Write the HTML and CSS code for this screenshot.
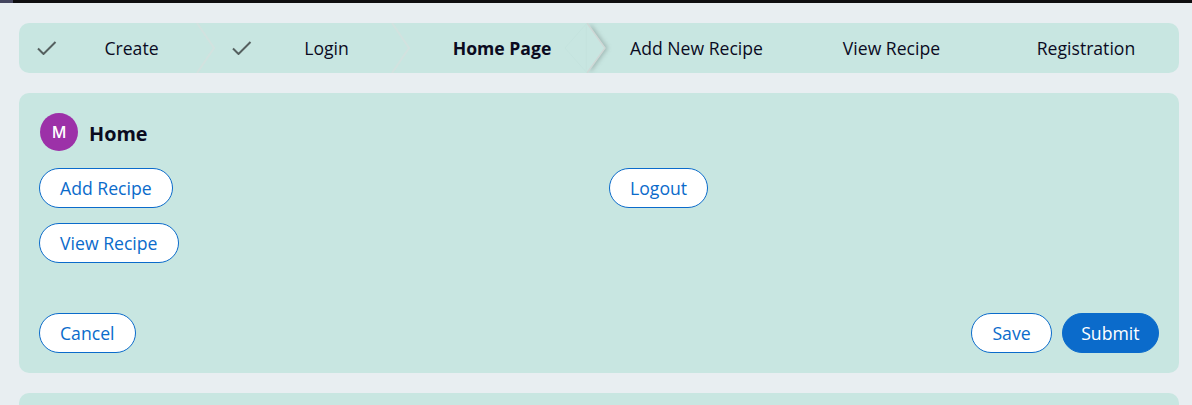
FILE: index.html
```html
<!DOCTYPE html>
<html>
    <head>
        <link rel="stylesheet" href="styles.css">
    </head>
    <body>
        <div class="topbar"><div class="topbar-tab"></div></div>
        <div class="page">
            <div class="stepper">
                <div class="step step-done">
                    <svg class="check" width="20" height="14" viewBox="0 0 20 14"><path d="M1 7.5 L6.5 13 L18.5 1" fill="none" stroke="#55605f" stroke-width="2"/></svg>
                    <span class="step-label">Create</span>
                    <svg class="sep" width="18" height="50" viewBox="0 0 18 50"><path d="M0 0 L17 25 L0 50" fill="none" stroke="#d2e2df" stroke-width="2"/></svg>
                </div>
                <div class="step step-done">
                    <svg class="check" width="20" height="14" viewBox="0 0 20 14"><path d="M1 7.5 L6.5 13 L18.5 1" fill="none" stroke="#55605f" stroke-width="2"/></svg>
                    <span class="step-label">Login</span>
                    <svg class="sep" width="18" height="50" viewBox="0 0 18 50"><path d="M0 0 L17 25 L0 50" fill="none" stroke="#d2e2df" stroke-width="2"/></svg>
                </div>
                <div class="step step-current">
                    <span class="step-label">Home Page</span>
                    <svg class="sep sep-current" width="48" height="50" viewBox="0 0 48 50">
                        <polygon class="sep-shape" points="27,0 45,25 27,50"/>
                        <path class="sep-edge" d="M27 0 L45 25 L27 50"/>
                        <path class="sep-back" d="M27 0 L5 25 L27 50"/>
                    </svg>
                </div>
                <div class="step"><span class="step-label">Add New Recipe</span></div>
                <div class="step step-view"><span class="step-label">View Recipe</span></div>
                <div class="step step-last"><span class="step-label">Registration</span></div>
            </div>

            <div class="panel">
                <div class="panel-head">
                    <div class="avatar">M</div>
                    <h2 class="panel-title">Home</h2>
                </div>
                <div class="actions">
                    <div class="actions-col">
                        <button class="btn">Add Recipe</button>
                        <button class="btn">View Recipe</button>
                    </div>
                    <div class="actions-col">
                        <button class="btn">Logout</button>
                    </div>
                </div>
                <div class="panel-foot">
                    <button class="btn">Cancel</button>
                    <div class="foot-right">
                        <button class="btn">Save</button>
                        <button class="btn btn-primary">Submit</button>
                    </div>
                </div>
            </div>

            <div class="panel panel-next"></div>
        </div>
    </body>
</html>
```

FILE: styles.css
```css
html, body {
    margin: 0;
    height: 405px;
    overflow: hidden;
}

body {
    background-color: #e8eef1;
    font-family: "Open Sans", "Liberation Sans", sans-serif;
    font-size: 17.6px;
    color: #0b0b1f;
}

.topbar {
    height: 3px;
    background-color: #0e0e10;
}

.topbar-tab {
    width: 13px;
    height: 3px;
    background-color: #44465f;
}

.page {
    padding: 20px 13px 0 19px;
    display: flex;
    flex-direction: column;
    gap: 20px;
}

/* stepper */
.stepper {
    display: flex;
    height: 50px;
    background-color: #c8e6e1;
    border-radius: 10px;
    overflow: hidden;
}

.step {
    position: relative;
    width: 195px;
    display: flex;
    align-items: center;
    flex: none;
    box-sizing: border-box;
}

.step-done {
    padding: 0 8px 0 18px;
}

.check {
    flex: none;
}

.step-label {
    flex: 1;
    text-align: center;
}

.step-current {
    width: 190px;
    padding-right: 4px;
    font-weight: 700;
}

.step-view {
    width: 194px;
    padding-left: 1px;
}

.step-last {
    width: 191px;
    padding-left: 5px;
}

.sep {
    position: absolute;
    top: 0;
    right: -1px;
    overflow: visible;
}

.sep-current {
    right: -9px;
}

.sep-shape {
    fill: #c8e6e1;
    filter: drop-shadow(3px 0 2px rgba(70, 80, 80, 0.3));
}

.sep-edge {
    fill: none;
    stroke: #cfd8d6;
    stroke-width: 1.5;
}

.sep-back {
    fill: none;
    stroke: #c4e3de;
    stroke-width: 1;
}

/* panels */
.panel {
    background-color: #c8e6e1;
    border-radius: 10px;
    height: 280px;
    box-sizing: border-box;
    padding: 20px;
    display: flex;
    flex-direction: column;
}

.panel-next {
    height: 12px;
    border-radius: 10px 10px 0 0;
    padding: 0;
}

.panel-head {
    display: flex;
    align-items: center;
    gap: 11px;
    height: 38px;
    margin-left: 1px;
}

.avatar {
    width: 38px;
    height: 38px;
    border-radius: 50%;
    background-color: #9c31a8;
    color: #fff;
    font-size: 16px;
    font-weight: 600;
    display: flex;
    align-items: center;
    justify-content: center;
}

.panel-title {
    margin: 2px 0 0;
    font-size: 19.8px;
    font-weight: 700;
}

.actions {
    display: grid;
    grid-template-columns: 570px 1fr;
    margin-top: 17px;
}

.actions-col {
    display: flex;
    flex-direction: column;
    align-items: flex-start;
    gap: 15px;
}

.panel-foot {
    margin-top: auto;
    display: flex;
    justify-content: space-between;
}

.foot-right {
    display: flex;
    gap: 10px;
}

/* buttons */
.btn {
    height: 40px;
    padding: 0 20px;
    border: 1px solid #0b6bcb;
    border-radius: 20px;
    background-color: #fff;
    color: #0b6bcb;
    font-family: inherit;
    font-size: 17.65px;
}

.btn-primary {
    padding: 0 18.5px;
    background-color: #0b6bcb;
    color: #fff;
}
```
